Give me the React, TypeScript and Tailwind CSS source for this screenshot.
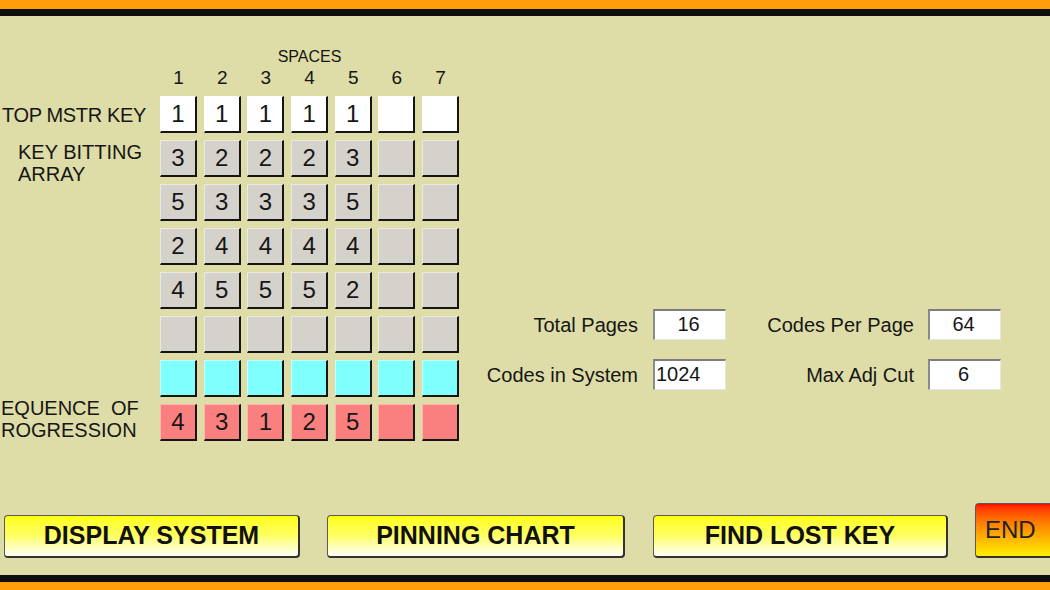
import React from 'react';

type Kind = 'white' | 'gray' | 'cyan' | 'pink';

const rows: { kind: Kind; vals: string[] }[] = [
  { kind: 'white', vals: ['1', '1', '1', '1', '1', '', ''] },
  { kind: 'gray', vals: ['3', '2', '2', '2', '3', '', ''] },
  { kind: 'gray', vals: ['5', '3', '3', '3', '5', '', ''] },
  { kind: 'gray', vals: ['2', '4', '4', '4', '4', '', ''] },
  { kind: 'gray', vals: ['4', '5', '5', '5', '2', '', ''] },
  { kind: 'gray', vals: ['', '', '', '', '', '', ''] },
  { kind: 'cyan', vals: ['', '', '', '', '', '', ''] },
  { kind: 'pink', vals: ['4', '3', '1', '2', '5', '', ''] },
];

const cellColor: Record<Kind, string> = {
  white: 'bg-white border-t-white border-l-white',
  gray: 'bg-[#d5d2cb] border-t-[#ebe9e4] border-l-[#ebe9e4]',
  cyan: 'bg-[#80ffff] border-t-[#c4ffff] border-l-[#c4ffff]',
  pink: 'bg-[#fa8080] border-t-[#ffb4b4] border-l-[#ffb4b4]',
};

function Cell({ kind, value }: { kind: Kind; value: string }) {
  return (
    <div
      className={`w-[37px] h-[37px] flex items-center justify-center border-t border-l border-r-2 border-b-2 border-r-[#151515] border-b-[#151515] text-[24px] leading-none ${cellColor[kind]}`}
    >
      {value}
    </div>
  );
}

function RowLabel({ index }: { index: number }) {
  if (index === 0) {
    return (
      <div className="w-[160px] shrink-0 flex justify-end items-center pr-[14px] text-[20px] tracking-[-0.35px]">
        <span className="whitespace-nowrap">TOP MSTR KEY</span>
      </div>
    );
  }
  if (index === 1) {
    return (
      <div className="w-[160px] shrink-0 self-start pt-[1px] pl-[18px] text-[20px] leading-[22px]">
        <div>KEY BITTING</div>
        <div>ARRAY</div>
      </div>
    );
  }
  if (index === 7) {
    return (
      <div className="w-[160px] shrink-0 self-start -mt-[7px] pl-[1px] text-[20px] leading-[22px]">
        <div className="whitespace-pre">EQUENCE  OF</div>
        <div>ROGRESSION</div>
      </div>
    );
  }
  return <div className="w-[160px] shrink-0" />;
}

function Field({ value, align }: { value: string; align: 'center' | 'left' }) {
  return (
    <div
      className={`h-[31px] bg-white border-t-2 border-l-2 border-t-[#7d7d7d] border-l-[#8a8a8a] border-b border-r border-b-[#e6e6e6] border-r-[#e6e6e6] flex items-center text-[20px] pb-[3px] ${
        align === 'center' ? 'justify-center pr-[3px]' : 'justify-start pl-[1px]'
      }`}
    >
      {value}
    </div>
  );
}

function YellowButton({ label, className }: { label: string; className: string }) {
  return (
    <button
      className={`h-[43px] rounded-[4px] border border-[#5a5a5a] border-r-2 border-b-2 border-r-[#333] border-b-[#333] bg-linear-to-b from-[#ffff00] via-[#ffff60] to-[#fffff2] text-[25px] font-bold text-[#111] flex items-center justify-center ${className}`}
    >
      {label}
    </button>
  );
}

export default function App() {
  return (
    <div className="w-[1050px] h-[590px] overflow-hidden bg-[#dedca7] flex flex-col font-['Liberation_Sans',Arial,sans-serif] text-[#161616]">
      <div className="h-[9px] shrink-0 bg-[#ff9d0a]" />
      <div className="h-[7px] shrink-0 bg-[#0e0e0e]" />

      <div className="flex-1 flex flex-col">
        <div className="flex">
          {/* Bitting grid */}
          <div className="w-[460px] shrink-0 pt-[32px]">
            <div className="flex">
              <div className="w-[160px] shrink-0" />
              <div className="w-[299px]">
                <div className="text-center text-[16px] leading-[18px]">SPACES</div>
                <div className="mt-[2px] mb-[8px] flex gap-[6.7px]">
                  {[1, 2, 3, 4, 5, 6, 7].map((n) => (
                    <div key={n} className="w-[37px] text-center text-[19px] leading-[20px]">
                      {n}
                    </div>
                  ))}
                </div>
              </div>
            </div>

            <div className="flex flex-col gap-[7px]">
              {rows.map((row, i) => (
                <div key={i} className="flex h-[37px]">
                  <RowLabel index={i} />
                  <div className="flex gap-[6.7px]">
                    {row.vals.map((v, j) => (
                      <Cell key={j} kind={row.kind} value={v} />
                    ))}
                  </div>
                </div>
              ))}
            </div>
          </div>

          {/* System totals */}
          <div className="pt-[293px] flex flex-col gap-[19px] text-[20px]">
            <div className="flex items-center">
              <div className="w-[178px] text-right whitespace-nowrap">Total Pages</div>
              <div className="ml-[15px] w-[73px]">
                <Field value="16" align="center" />
              </div>
              <div className="w-[188px] text-right whitespace-nowrap">Codes Per Page</div>
              <div className="ml-[14px] w-[73px]">
                <Field value="64" align="center" />
              </div>
            </div>
            <div className="flex items-center">
              <div className="w-[178px] text-right whitespace-nowrap">Codes in System</div>
              <div className="ml-[15px] w-[73px]">
                <Field value="1024" align="left" />
              </div>
              <div className="w-[188px] text-right whitespace-nowrap">Max Adj Cut</div>
              <div className="ml-[14px] w-[73px]">
                <Field value="6" align="center" />
              </div>
            </div>
          </div>
        </div>

        {/* Buttons */}
        <div className="mt-auto pb-[17px] flex items-end">
          <YellowButton label="DISPLAY SYSTEM" className="ml-[4px] w-[296px] shrink-0" />
          <YellowButton label="PINNING CHART" className="ml-[27px] w-[298px] shrink-0" />
          <YellowButton label="FIND LOST KEY" className="ml-[28px] w-[295px] shrink-0" />
          <button className="ml-[27px] w-[80px] h-[55px] shrink-0 rounded-[4px] border border-[#5a5a5a] border-b-2 border-b-[#333] bg-linear-to-b from-[#ff0000] to-[#ffee00] text-[24px] text-[#222] flex items-start pt-[8px] pl-[9px]">
            END
          </button>
        </div>
      </div>

      <div className="h-[7px] shrink-0 bg-[#0e0e0e]" />
      <div className="h-[8px] shrink-0 bg-[#ff9d0a]" />
    </div>
  );
}
